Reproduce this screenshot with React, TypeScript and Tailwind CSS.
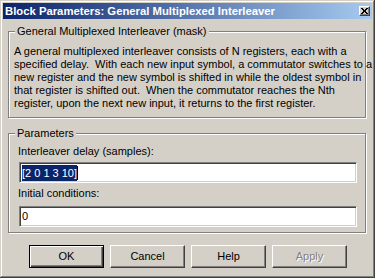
import React from "react";

function CloseButton() {
  return (
    <div className="w-[11px] h-[10px] bg-[#D4D0C8] border border-t-white border-l-white border-r-[#404040] border-b-[#404040] shadow-[inset_-1px_-1px_0_#808080] flex items-center justify-center">
      <svg width="7" height="6" viewBox="0 0 7 6" shapeRendering="crispEdges">
        <path d="M0 0h2v1h-2zM5 0h2v1h-2zM1 1h2v1h-2zM4 1h2v1h-2zM2 2h3v1h-3zM2 3h3v1h-3zM1 4h2v1h-2zM4 4h2v1h-2zM0 5h2v1h-2zM5 5h2v1h-2z" fill="#000" />
      </svg>
    </div>
  );
}

function Btn({ label, primary, disabled }: { label: string; primary?: boolean; disabled?: boolean }) {
  const base = "w-[75px] h-[23px] bg-[#D4D0C8] flex items-center justify-center text-[11px] leading-[13px]";
  const cls = primary
    ? base + " border border-black shadow-[inset_1px_1px_0_#fff,inset_-1px_-1px_0_#404040,inset_-2px_-2px_0_#808080]"
    : base + " border border-t-white border-l-white border-r-[#404040] border-b-[#404040] shadow-[inset_-1px_-1px_0_#808080]";
  return (
    <div className={cls}>
      <span className={disabled ? "text-[#808080] [text-shadow:1px_1px_0_#fff]" : "text-black"}>{label}</span>
    </div>
  );
}

function Field({ children }: { children: React.ReactNode }) {
  return (
    <div className="ml-[1px] w-[338px] h-[21px] bg-white border border-t-[#808080] border-l-[#808080] border-r-white border-b-white shadow-[inset_1px_1px_0_#404040,inset_-1px_-1px_0_#D4D0C8] pl-[2px] flex items-center">
      {children}
    </div>
  );
}

export default function App() {
  const lines = [
    "A general multiplexed interleaver consists of N registers, each with a",
    "specified delay.  With each new input symbol, a commutator switches to a",
    "new register and the new symbol is shifted in while the oldest symbol in",
    "that register is shifted out.  When the commutator reaches the Nth",
    "register, upon the next new input, it returns to the first register.",
  ];
  return (
    <div className="w-[375px] h-[278px] bg-[#D4D0C8] p-[3px] flex flex-col font-['Liberation_Sans',Arial,sans-serif] text-[11px] leading-[13px] text-black shadow-[inset_-1px_-1px_0_#404040,inset_1px_1px_0_#D4D0C8,inset_-2px_-2px_0_#808080,inset_2px_2px_0_#fff]">
      <div className="h-[16px] flex items-center justify-between bg-[linear-gradient(to_right,#0A246A,#A6CAF0)] pl-[2px] pr-[2px]">
        <span className="text-white font-bold text-[11.3px] leading-[13px] whitespace-pre">
          Block Parameters: General Multiplexed Interleaver
        </span>
        <CloseButton />
      </div>

      <div className="pl-[5px]">
        <div className="relative mt-[12px] w-[358px] h-[87px] border border-[#808080] shadow-[inset_1px_1px_0_#fff,1px_1px_0_#fff] pt-[13px] pl-[5px]">
          <span className="absolute left-[6px] top-[-7px] bg-[#D4D0C8] px-[2px] whitespace-pre">
            General Multiplexed Interleaver (mask)
          </span>
          {lines.map((l, i) => (
            <div key={i} className="whitespace-pre">
              {l}
            </div>
          ))}
        </div>

        <div className="relative mt-[15px] w-[358px] h-[100px] border border-[#808080] shadow-[inset_1px_1px_0_#fff,1px_1px_0_#fff] pt-[11px] pl-[9px]">
          <span className="absolute left-[6px] top-[-7px] bg-[#D4D0C8] px-[2px] whitespace-pre">Parameters</span>
          <div className="whitespace-pre">Interleaver delay (samples):</div>
          <div className="mt-[4px]">
            <Field>
              <span className="bg-[#0A246A] text-white leading-[16px] whitespace-pre">[2 0 1 3 10]</span>
              <span className="w-[1px] h-[14px] bg-black" />
            </Field>
          </div>
          <div className="mt-[4px] whitespace-pre">Initial conditions:</div>
          <div className="mt-[6px]">
            <Field>
              <span className="whitespace-pre">0</span>
            </Field>
          </div>
        </div>
      </div>

      <div className="mt-[12px] flex gap-[6px] pl-[26px]">
        <Btn label="OK" primary />
        <Btn label="Cancel" />
        <Btn label="Help" />
        <Btn label="Apply" disabled />
      </div>
    </div>
  );
}
